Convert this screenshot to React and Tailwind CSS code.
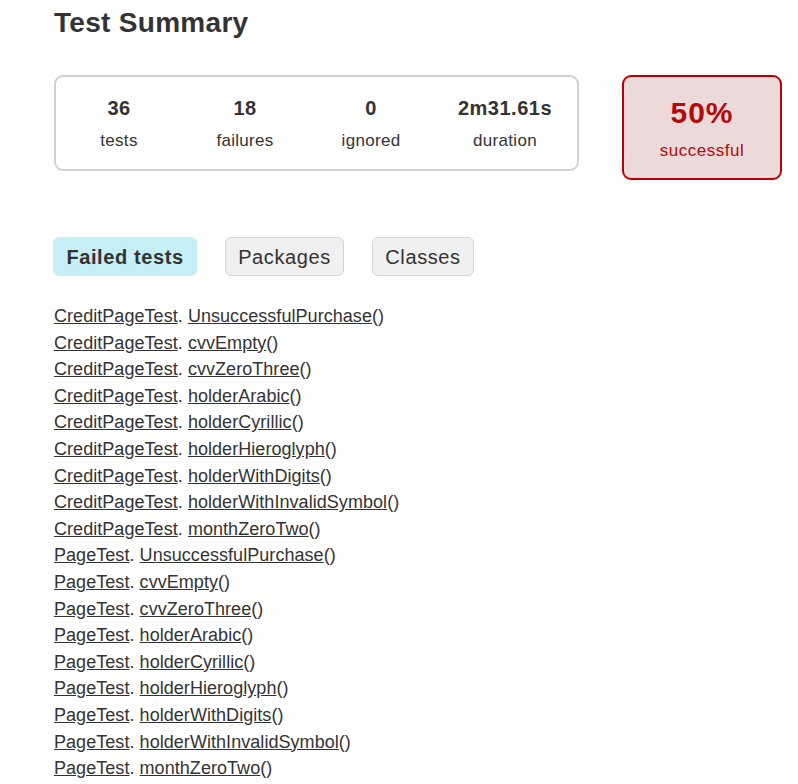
export default function App() {
  const methods = [
    "UnsuccessfulPurchase",
    "cvvEmpty",
    "cvvZeroThree",
    "holderArabic",
    "holderCyrillic",
    "holderHieroglyph",
    "holderWithDigits",
    "holderWithInvalidSymbol",
    "monthZeroTwo",
  ];
  const rows = [
    ...methods.map((m) => ["CreditPageTest", m]),
    ...methods.map((m) => ["PageTest", m]),
  ];
  const stats = [
    ["36", "tests", "w-[126px]"],
    ["18", "failures", "w-[126px]"],
    ["0", "ignored", "w-[126px]"],
    ["2m31.61s", "duration", "w-[142px]"],
  ];
  return (
    <div className="pl-[54px] pt-[7px] text-[#333] font-['Liberation_Sans',Arial,sans-serif]">
      <h1 className="text-[28px] font-bold leading-[32px] tracking-[0.3px]">Test Summary</h1>
      <div className="flex items-start mt-[36px]">
        <div className="flex w-[525px] h-[96px] border-2 border-[#d0d0d0] rounded-[9px]">
          {stats.map(([n, l, w]) => (
            <div key={l} className={`${w} flex flex-col items-center pt-[19px]`}>
              <div className="text-[20px] font-bold leading-[24px] tracking-[0.5px]">{n}</div>
              <div className="text-[17px] leading-[20px] mt-[11px] tracking-[0.3px]">{l}</div>
            </div>
          ))}
        </div>
        <div className="ml-[43px] w-[160px] h-[105px] border-2 border-[#c00000] bg-[#ecdada] rounded-[9px] flex flex-col items-center pt-[19px] text-[#b60808]">
          <div className="text-[30px] font-bold leading-[34px] tracking-[1px]">50%</div>
          <div className="text-[17px] leading-[20px] mt-[11px] tracking-[0.5px]">successful</div>
        </div>
      </div>
      <div className="flex mt-[57px] -ml-[1px] text-[20px] leading-[24px] tracking-[0.6px]">
        <div className="w-[144px] h-[39px] rounded-[6px] bg-[#c5eff5] font-bold flex items-center justify-center">Failed tests</div>
        <div className="ml-[28px] w-[119px] h-[39px] rounded-[6px] bg-[#f0f0f0] border border-[#d4d4d4] flex items-center justify-center">Packages</div>
        <div className="ml-[28px] w-[102px] h-[39px] rounded-[6px] bg-[#f0f0f0] border border-[#d4d4d4] flex items-center justify-center">Classes</div>
      </div>
      <div className="mt-[27px] text-[18px] leading-[26.6px] tracking-[0.05px] text-[#333]">
        {rows.map(([c, m], i) => (
          <div key={i} className="whitespace-nowrap">
            <span className="underline">{c}</span>.{" "}
            <span className="underline">{m}</span>()
          </div>
        ))}
      </div>
    </div>
  );
}
